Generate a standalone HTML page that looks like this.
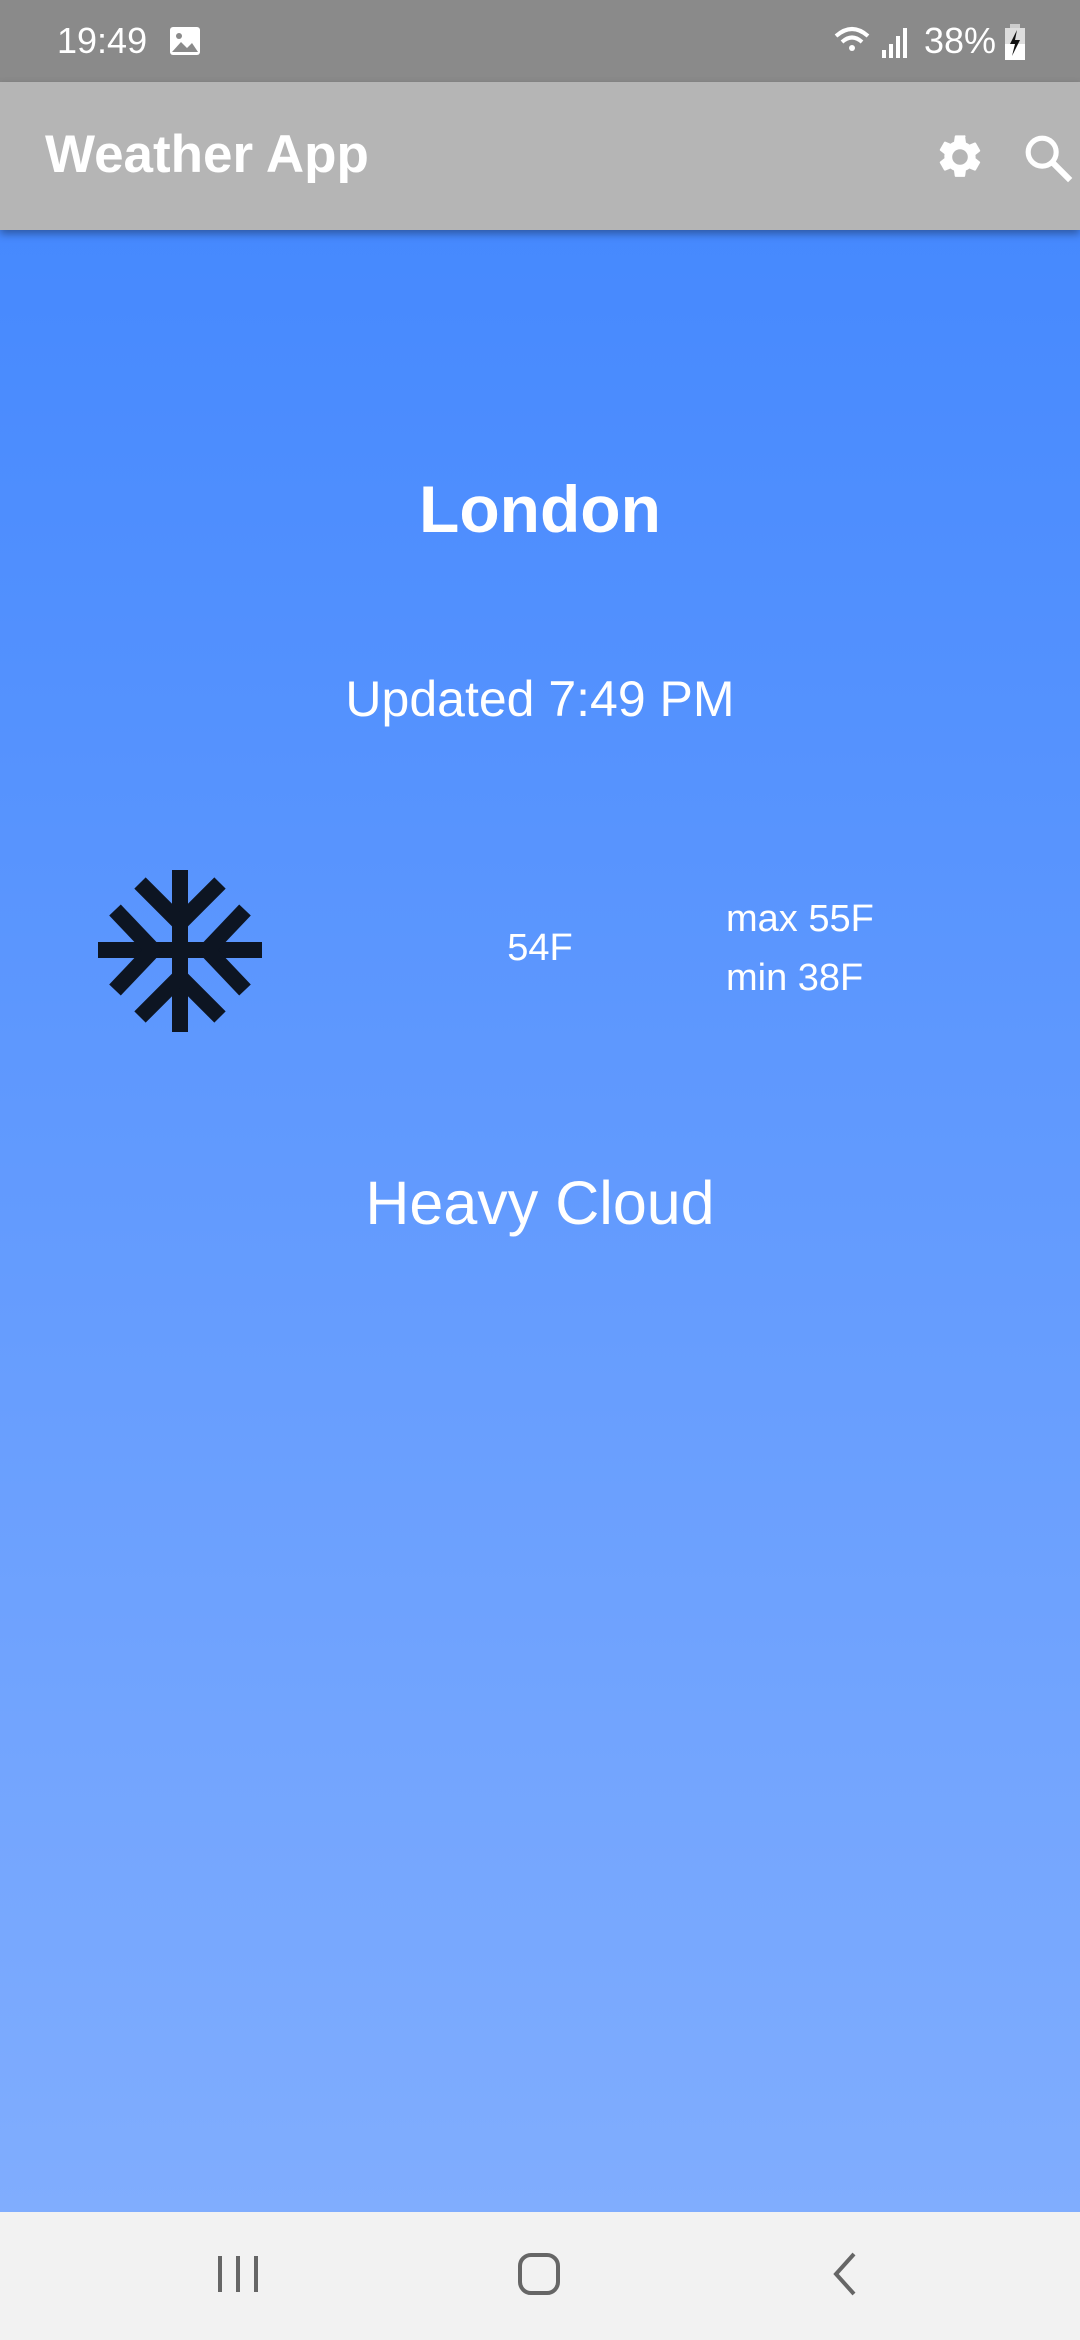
<!DOCTYPE html>
<html><head><meta charset="utf-8"><style>
*{margin:0;padding:0;box-sizing:border-box}
body{width:1080px;height:2340px;overflow:hidden;font-family:"Liberation Sans",sans-serif;position:relative;background:#f2f2f2}
.status{position:absolute;left:0;top:0;width:1080px;height:82px;background:#8a8a8a;color:#fff}
.app{position:absolute;left:0;top:82px;width:1080px;height:148px;background:#b5b5b5;box-shadow:0 4px 8px rgba(0,0,0,.35);z-index:2}
.main{position:absolute;left:0;top:230px;width:1080px;height:1982px;background:linear-gradient(#4689fe,#80adfe)}
.nav{position:absolute;left:0;top:2212px;width:1080px;height:128px;background:#f2f2f2}
.t{position:absolute;color:#fff;white-space:nowrap}
.c{left:0;width:1080px;text-align:center}
</style></head><body>
<div class="status">
  <div class="t" style="left:57px;top:20px;font-size:36px">19:49</div>
  <svg style="position:absolute;left:169px;top:26px" width="32" height="30"><rect x="1" y="1" width="30" height="28" rx="3" fill="#fff"/><circle cx="10" cy="10" r="3" fill="#8a8a8a"/><path d="M3 26 L12 16 L18 22 L23 17 L29 26Z" fill="#8a8a8a"/></svg>
  <svg style="position:absolute;left:832px;top:24px" width="80" height="36"><path d="M4 12 Q20 -2 36 12" stroke="#fff" stroke-width="4" fill="none"/><path d="M10 18 Q20 9 30 18" stroke="#fff" stroke-width="4" fill="none"/><circle cx="20" cy="24" r="3" fill="#fff"/><rect x="50" y="26" width="4" height="8" fill="#fff"/><rect x="57" y="20" width="4" height="14" fill="#fff"/><rect x="64" y="12" width="4" height="22" fill="#fff"/><rect x="71" y="4" width="4" height="30" fill="#fff"/></svg>
  <div class="t" style="left:924px;top:20px;font-size:36px">38%</div>
  <svg style="position:absolute;left:1004px;top:24px" width="22" height="36"><rect x="6" y="0" width="10" height="4" fill="#ccc"/><rect x="1" y="4" width="20" height="32" fill="#ddd"/><rect x="1" y="20" width="20" height="16" fill="#fff"/><path d="M13 6 L6 20 L11 20 L8 32 L16 16 L11 16Z" fill="#111"/></svg>
</div>
<div class="app">
  <div class="t" style="left:45px;top:42px;font-size:53px;font-weight:bold">Weather App</div>
  <svg style="position:absolute;left:934px;top:49px" width="52" height="52" viewBox="0 0 24 24"><path fill="#fff" d="M19.14 12.94c.04-.3.06-.61.06-.94s-.02-.64-.07-.94l2.030-1.58a.49.49 0 00.12-.61l-1.920-3.320a.49.49 0 00-.59-.22l-2.390.96c-.5-.38-1.030-.7-1.620-.94l-.36-2.540A.48.48 0 0013.920 2h-3.840a.48.48 0 00-.48.41l-.36 2.540c-.59.24-1.130.57-1.620.94l-2.390-.96a.49.49 0 00-.59.22L2.720 8.470a.47.47 0 00.12.61l2.030 1.580c-.05.3-.09.63-.09.94s.02.64.07.94l-2.030 1.580a.49.49 0 00-.12.61l1.920 3.320c.12.22.37.29.59.22l2.390-.96c.5.38 1.030.7 1.620.94l.36 2.540c.05.24.24.41.48.41h3.840c.24 0 .44-.17.47-.41l.36-2.540c.59-.24 1.130-.56 1.620-.94l2.390.96c.22.08.47 0 .59-.22l1.920-3.320a.47.47 0 00-.12-.61l-2.010-1.580zM12 15.6A3.6 3.6 0 1112 8.4a3.6 3.6 0 010 7.2z"/></svg>
  <svg style="position:absolute;left:1020px;top:48px" width="56" height="56" viewBox="0 0 24 24"><circle cx="9.5" cy="9.5" r="6" stroke="#fff" stroke-width="2.2" fill="none"/><path d="M14 14 L21.5 21.5" stroke="#fff" stroke-width="2.6"/></svg>
</div>
<div class="main">
  <div class="t c" style="top:241px;font-size:66px;font-weight:bold">London</div>
  <div class="t c" style="top:440px;font-size:50px">Updated 7:49 PM</div>
  <svg style="position:absolute;left:90px;top:630px" width="180" height="180" viewBox="0 0 180 180">
    <g stroke="#0d1522" stroke-width="16" fill="none">
      <path d="M90 10 V172 M8 90 H172"/>
      <path d="M50 23 L90 63 L130 23 M50 157 L90 117 L130 157"/>
      <path d="M25 50 L63 90 L25 130 M155 50 L117 90 L155 130"/>
    </g>
  </svg>
  <div class="t c" style="top:697px;font-size:38px">54F</div>
  <div class="t" style="left:726px;top:668px;font-size:38px">max 55F</div>
  <div class="t" style="left:726px;top:727px;font-size:38px">min 38F</div>
  <div class="t c" style="top:938px;font-size:61px">Heavy Cloud</div>
</div>
<div class="nav">
  <svg style="position:absolute;left:216px;top:40px" width="44" height="44"><rect x="2" y="4" width="4" height="36" fill="#666"/><rect x="20" y="4" width="4" height="36" fill="#666"/><rect x="38" y="4" width="4" height="36" fill="#666"/></svg>
  <svg style="position:absolute;left:517px;top:40px" width="44" height="44"><rect x="3" y="3" width="38" height="38" rx="11" stroke="#666" stroke-width="4" fill="none"/></svg>
  <svg style="position:absolute;left:826px;top:38px" width="36" height="48"><path d="M28 4 L10 24 L28 44" stroke="#666" stroke-width="4" fill="none"/></svg>
</div>
</body></html>
